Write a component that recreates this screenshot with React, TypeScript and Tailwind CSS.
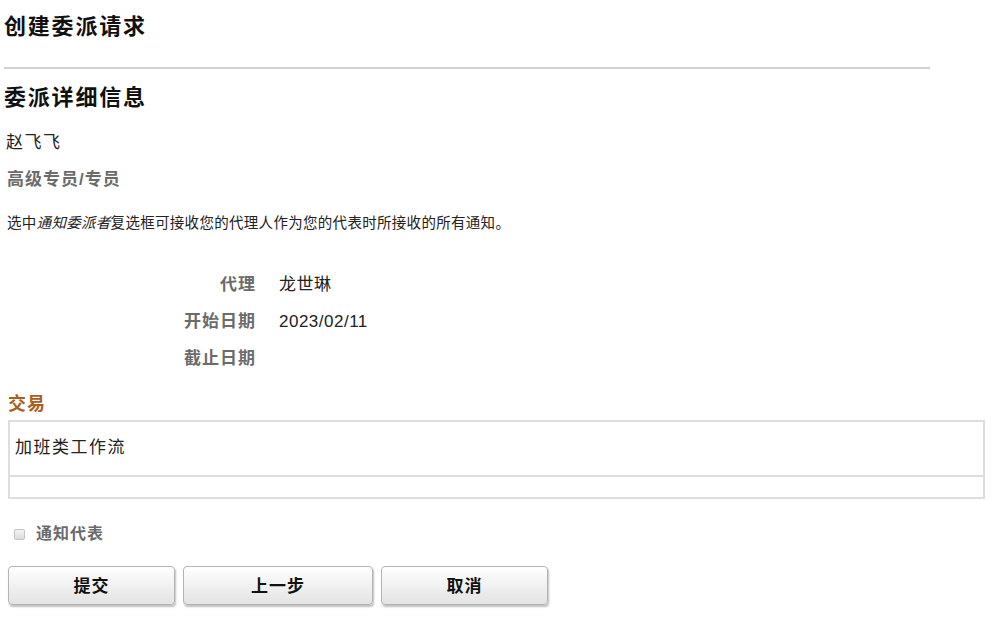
const font = { fontFamily: '"Liberation Sans", "Noto Sans CJK SC", sans-serif' };

type FieldRow = { label: string; value?: string };

const fields: FieldRow[] = [
  { label: "代理", value: "龙世琳" },
  { label: "开始日期", value: "2023/02/11" },
  { label: "截止日期" },
];

function ActionButton({ label, width }: { label: string; width: string }) {
  return (
    <button
      className={`${width} h-[39px] rounded-[4px] border border-[#b4b4b4] bg-gradient-to-b from-[#ffffff] to-[#e3e3e3] pt-[3px] text-[17px] font-bold tracking-[1px] text-[#111] shadow-[1px_2px_2px_rgba(0,0,0,0.25)]`}
    >
      {label}
    </button>
  );
}

export default function App() {
  return (
    <div className="h-[618px] w-[1007px] overflow-hidden bg-white text-[#222]" style={font}>
      <div className="flex h-[52px] items-center pl-[4px] text-[22px] font-bold tracking-[1.8px] text-[#111]">
        创建委派请求
      </div>
      <div className="ml-[4px] mt-[15px] h-[2px] w-[926px] bg-[#d2d2d2]" />

      <div className="flex h-[56px] items-center pl-[4px] text-[22px] font-bold tracking-[1.8px] text-[#111]">
        委派详细信息
      </div>
      <div className="flex h-[36px] items-center pl-[6px] text-[17px] tracking-[1.5px]">赵飞飞</div>
      <div className="flex h-[38px] items-center pl-[7px] text-[17px] font-bold tracking-[1px] text-[#6b6b6b]">
        高级专员/专员
      </div>
      <div className="flex h-[50px] items-center pl-[7px] text-[14.5px] tracking-[0.3px]">
        选中<em className="italic">通知委派者</em>复选框可接收您的代理人作为您的代表时所接收的所有通知。
      </div>

      <div className="mt-[17px] flex flex-col">
        {fields.map((f) => (
          <div key={f.label} className="flex h-[37px] items-center">
            <span className="w-[256px] text-right text-[17px] font-bold tracking-[1px] text-[#6b6b6b]">
              {f.label}
            </span>
            <span className="ml-[23px] text-[17px] tracking-[0.5px]">{f.value}</span>
          </div>
        ))}
      </div>

      <div className="ml-[8px] flex h-[43px] items-end pb-[2px] text-[18px] font-bold tracking-[1px] text-[#a85f22]">
        交易
      </div>
      <div className="mx-[8px] w-[977px]">
        <div className="h-[57px] border-2 border-[#dedede] pl-[5px] pt-[13px] text-[17px] tracking-[1.5px]">
          加班类工作流
        </div>
        <div className="h-[22px] border-2 border-t-0 border-[#dedede]" />
      </div>

      <div className="flex h-[67px] items-center pb-[1px] pl-[14px] pt-[4px]">
        <span className="h-[11px] w-[11px] rounded-[2px] border border-[#c4c4c4] bg-gradient-to-b from-[#f4f4f4] to-[#dcdcdc]" />
        <span className="ml-[11px] text-[16px] font-bold tracking-[1px] text-[#6b6b6b]">通知代表</span>
      </div>

      <div className="flex gap-[8px] pl-[8px]">
        <ActionButton label="提交" width="w-[167px]" />
        <ActionButton label="上一步" width="w-[190px]" />
        <ActionButton label="取消" width="w-[167px]" />
      </div>
    </div>
  );
}
